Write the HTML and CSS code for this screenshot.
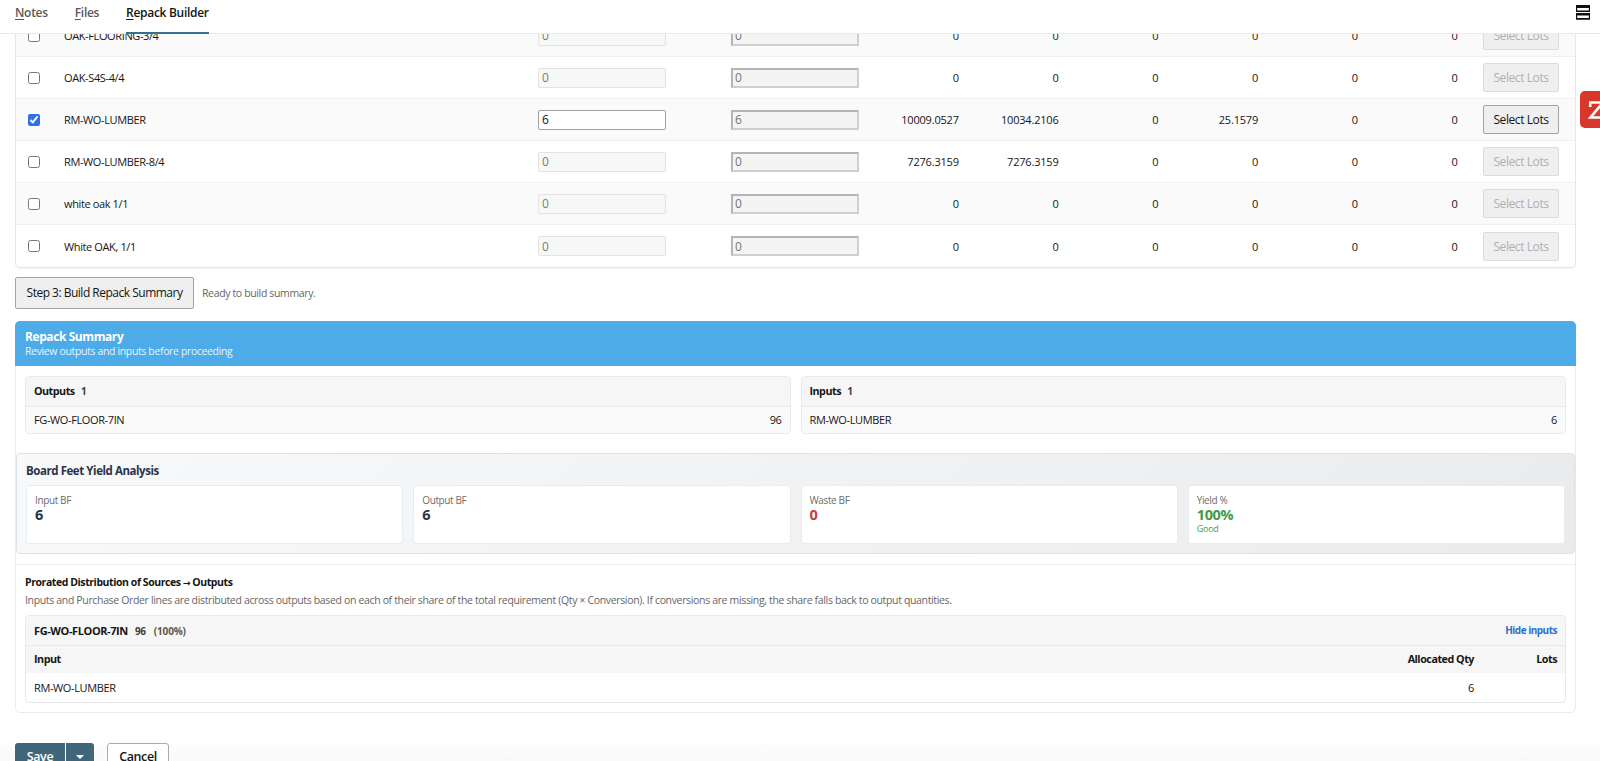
FILE: index.html
```html
<!DOCTYPE html>
<html lang="en">
<head>
  <meta charset="UTF-8">
  <title>Repack Builder</title>
  <link rel="stylesheet" href="styles.css">
</head>
<body>
  <div class="tabs">
    <a class="tab"><u>N</u>otes</a>
    <a class="tab"><u>F</u>iles</a>
    <a class="tab active"><u>R</u>epack Builder</a>
    <svg class="layout-icon" width="14" height="15" viewBox="0 0 14 15">
      <path fill="#111" fill-rule="evenodd" d="M0 0h14v7H0zM1.2 3v2.4h11.6V3zM0 8h14v6.7H0zM1.2 10.6v2.4h11.6v-2.4z"/>
    </svg>
  </div>

  <div class="content">
    <div class="lines" id="lines">
      <!-- Item rows are added here -->
    </div>

    <div class="step">
      <button type="button" class="btn step-btn">Step 3: Build Repack Summary</button>
      <span class="status">Ready to build summary.</span>
    </div>

    <div class="summary">
      <div class="summary-header">
        <div class="summary-title">Repack Summary</div>
        <div class="summary-sub">Review outputs and inputs before proceeding</div>
      </div>

      <div class="panels">
        <div class="panel">
          <div class="panel-head">Outputs <span class="count">1</span></div>
          <div class="panel-row"><span>FG-WO-FLOOR-7IN</span><span>96</span></div>
        </div>
        <div class="panel">
          <div class="panel-head">Inputs <span class="count">1</span></div>
          <div class="panel-row"><span>RM-WO-LUMBER</span><span>6</span></div>
        </div>
      </div>

      <div class="yield">
        <div class="yield-title">Board Feet Yield Analysis</div>
        <div class="yield-cards">
          <div class="yield-card">
            <div class="label">Input BF</div>
            <div class="value">6</div>
          </div>
          <div class="yield-card">
            <div class="label">Output BF</div>
            <div class="value">6</div>
          </div>
          <div class="yield-card">
            <div class="label">Waste BF</div>
            <div class="value waste">0</div>
          </div>
          <div class="yield-card">
            <div class="label">Yield %</div>
            <div class="value good">100%</div>
            <div class="note">Good</div>
          </div>
        </div>
      </div>

      <div class="prorated">
        <div class="prorated-title">Prorated Distribution of Sources <span class="arrow">→</span> Outputs</div>
        <div class="prorated-text">Inputs and Purchase Order lines are distributed across outputs based on each of their share of the total requirement (Qty × Conversion). If conversions are missing, the share falls back to output quantities.</div>
        <div class="alloc">
          <div class="alloc-head">
            <span class="alloc-item">FG-WO-FLOOR-7IN</span>
            <span class="count">96</span>
            <span class="percent">(100%)</span>
            <a class="toggle">Hide inputs</a>
          </div>
          <div class="alloc-row alloc-cols"><span>Input</span><span>Allocated Qty</span><span>Lots</span></div>
          <div class="alloc-row"><span>RM-WO-LUMBER</span><span>6</span><span></span></div>
        </div>
      </div>
    </div>
  </div>

  <div class="footer">
    <div class="save">
      <button type="button" class="save-main">Save</button>
      <button type="button" class="save-more"><i class="caret"></i></button>
    </div>
    <button type="button" class="cancel">Cancel</button>
  </div>

  <div class="side-badge">
    <svg width="20" height="37" viewBox="0 0 20 37">
      <path d="M10.2 16V11.5H23L10.5 26.5H24" fill="none" stroke="#fff" stroke-width="2.6"/>
    </svg>
  </div>

  <script>
    const items = [
      { name: 'OAK-FLOORING-3/4', qty: 0, values: [0, 0, 0, 0, 0, 0] },
      { name: 'OAK-S4S-4/4', qty: 0, values: [0, 0, 0, 0, 0, 0] },
      { name: 'RM-WO-LUMBER', qty: 6, checked: true, values: ['10009.0527', '10034.2106', 0, '25.1579', 0, 0] },
      { name: 'RM-WO-LUMBER-8/4', qty: 0, values: ['7276.3159', '7276.3159', 0, 0, 0, 0] },
      { name: 'white oak 1/1', qty: 0, values: [0, 0, 0, 0, 0, 0] },
      { name: 'White OAK, 1/1', qty: 0, values: [0, 0, 0, 0, 0, 0] }
    ];

    const lines = document.getElementById('lines');

    items.forEach(item => {
      const row = document.createElement('div');
      row.className = 'line';
      row.innerHTML = `
        <input type="checkbox" ${item.checked ? 'checked' : ''}>
        <span class="name">${item.name}</span>
        <input class="qty" type="text" value="${item.qty}" ${item.checked ? '' : 'disabled'}>
        <input class="base-qty" type="text" value="${item.qty}" disabled>
        ${item.values.map(value => `<span class="num">${value}</span>`).join('')}
        <button type="button" class="btn lots-btn" ${item.checked ? '' : 'disabled'}>Select Lots</button>
      `;
      lines.appendChild(row);
    });
  </script>
</body>
</html>
```

FILE: styles.css
```css
* {
  box-sizing: border-box;
}

body {
  margin: 0;
  height: 761px;
  overflow: hidden;
  display: flex;
  flex-direction: column;
  font-family: "Open Sans", "Noto Sans", sans-serif;
  font-size: 11px;
  letter-spacing: -0.38px;
  color: #161513;
  background: #fff;
}

button,
input {
  font-family: inherit;
  letter-spacing: inherit;
  margin: 0;
}

/* Tabs */
.tabs {
  flex: none;
  height: 34px;
  display: flex;
  gap: 27px;
  padding: 0 10px 0 15px;
  border-bottom: 1px solid #e9e9e9;
  background: #fff;
  position: relative;
  z-index: 1;
}

.tab {
  height: 34px;
  line-height: 26px;
  font-size: 12px;
  letter-spacing: -0.3px;
  font-weight: 600;
  color: #5b5854;
  white-space: nowrap;
}

.tab.active {
  color: #161513;
  border-bottom: 2px solid #36718f;
}

.tab u {
  text-underline-offset: 2px;
}

.layout-icon {
  margin: 5px 0 0 auto;
}

/* Item lines */
.content {
  flex: none;
  height: 680px;
  padding: 0 24px 0 15px;
  overflow: hidden;
}

.lines {
  margin-top: -20px;
  border: 1px solid #e6e6e6;
  border-radius: 0 0 5px 5px;
  box-shadow: 0 1px 1px rgba(0, 0, 0, 0.05);
}

.line {
  height: 42px;
  display: grid;
  grid-template-columns: 48px 474px 193px 128px repeat(6, 99.75px) 1fr;
  align-items: center;
  padding-right: 16px;
  border-bottom: 1px solid #f0f0f0;
}

.line:nth-child(odd) {
  background: #fafafa;
}

.line:last-child {
  border-bottom: none;
}

.line input[type="checkbox"] {
  width: 12px;
  height: 12px;
  margin-left: 12px;
  accent-color: #2f6fe8;
}

.num {
  text-align: right;
  letter-spacing: -0.2px;
}

.qty,
.base-qty {
  width: 128px;
  height: 20px;
  padding: 0 3px;
  font-size: 12px;
  color: #161513;
  background: #fff;
  border: 1px solid #a0a0a0;
  border-radius: 2px;
}

.qty:disabled {
  color: #7b7b7b;
  background: #f7f7f7;
  border-color: #e2e2e2;
}

.base-qty {
  padding: 0 2px;
  color: #757575;
  background: #f4f4f4;
  border: 2px solid #cfcfcf;
  border-top-color: #b5b5b5;
  border-left-color: #b5b5b5;
  border-radius: 0;
}

.btn {
  color: #161513;
  background: #efefef;
  border: 1px solid #a3a3a3;
  border-radius: 2px;
  white-space: nowrap;
}

.lots-btn {
  justify-self: end;
  width: 76px;
  height: 29px;
  padding: 0;
  font-size: 12px;
  letter-spacing: -0.42px;
}

.lots-btn:disabled {
  color: #b0b0b0;
  border-color: #dcdcdc;
}

/* Step 3 */
.step {
  display: flex;
  align-items: center;
  gap: 8px;
  margin: 9px 0 12px;
}

.step-btn {
  width: 179px;
  height: 32px;
  padding: 0 0 1px;
  font-size: 12px;
  letter-spacing: -0.5px;
}

.status {
  font-size: 10.5px;
  letter-spacing: -0.36px;
  color: #666;
}

/* Summary */
.summary {
  border: 1px solid #ebebeb;
  border-radius: 5px;
}

.summary-header {
  height: 45px;
  margin: -1px -1px 0;
  padding: 8px 10px 0;
  color: #fff;
  background: #4dabe7;
  border-radius: 5px 5px 0 0;
}

.summary-title {
  font-size: 12px;
  letter-spacing: -0.42px;
  line-height: 15px;
  font-weight: 700;
}

.summary-sub {
  font-size: 10.5px;
  letter-spacing: -0.36px;
  line-height: 14px;
  color: #e6f4fd;
}

.panels {
  display: grid;
  grid-template-columns: 1fr 1fr;
  gap: 10px;
  padding: 10px 9px 19px;
}

.panel {
  height: 58px;
  border: 1px solid #e9e9e9;
  border-radius: 4px;
  background: #fafafa;
  overflow: hidden;
}

.panel-head {
  height: 30px;
  padding: 0 8px;
  line-height: 28px;
  font-size: 10.75px;
  letter-spacing: -0.5px;
  font-weight: 700;
  background: #f6f6f6;
  border-bottom: 1px solid #e9e9e9;
}

.count {
  margin-left: 4px;
  font-size: 10px;
  letter-spacing: -0.3px;
  font-weight: 700;
  color: #403e3b;
}

.panel-row {
  display: flex;
  justify-content: space-between;
  padding: 0 8px;
  line-height: 26px;
}

.yield {
  height: 101px;
  padding: 9px;
  border: 1px solid #dfe2e4;
  border-radius: 4px;
  background: linear-gradient(135deg, #f8f9fa 0%, #e9ebed 100%);
}

.yield-title {
  font-size: 11.5px;
  letter-spacing: -0.44px;
  line-height: 15px;
  font-weight: 700;
  color: #2c3449;
}

.yield-cards {
  display: grid;
  grid-template-columns: repeat(4, 1fr);
  gap: 10px;
  margin-top: 7px;
}

.yield-card {
  height: 59px;
  padding: 8px;
  background: #fff;
  border: 1px solid #e9ecef;
  border-radius: 3px;
}

.label {
  font-size: 10px;
  line-height: 13px;
  color: #6c6c6c;
}

.value {
  font-size: 14.5px;
  line-height: 16px;
  font-weight: 700;
  color: #2c3449;
}

.value.waste {
  color: #c43c46;
}

.value.good {
  color: #449b46;
}

.note {
  font-size: 9px;
  letter-spacing: -0.25px;
  line-height: 12px;
  color: #449b46;
}

/* Prorated distribution */
.prorated {
  margin-top: 10px;
  padding: 9px;
  border-top: 1px solid #efefef;
}

.prorated-title {
  height: 16px;
  font-size: 10.5px;
  letter-spacing: -0.43px;
  line-height: 16px;
  font-weight: 700;
}

.arrow {
  font-family: "DejaVu Sans", sans-serif;
  font-size: 9px;
  line-height: 1;
}

.prorated-text {
  margin: 2px 0 7px;
  font-size: 10.5px;
  letter-spacing: -0.345px;
  line-height: 16px;
  color: #666;
  white-space: nowrap;
}

.alloc {
  border: 1px solid #e9e9e9;
  border-radius: 4px;
  overflow: hidden;
}

.alloc-head {
  height: 30px;
  display: flex;
  align-items: center;
  padding: 0 8px;
  background: #f6f6f6;
  border-bottom: 1px solid #e9e9e9;
}

.alloc-item {
  font-weight: 700;
  letter-spacing: -0.4px;
  margin-right: 3px;
}

.percent {
  margin-left: 8px;
  font-size: 10px;
  letter-spacing: -0.15px;
  font-weight: 700;
  color: #5b5854;
}

.toggle {
  margin: -2px 0 0 auto;
  font-size: 10px;
  letter-spacing: -0.5px;
  font-weight: 700;
  color: #2f6fc9;
}

.alloc-row {
  display: grid;
  grid-template-columns: 1fr 200px 83px;
  height: 29px;
  line-height: 29px;
  padding: 0 8px;
}

.alloc-row span + span {
  text-align: right;
}

.alloc-cols {
  height: 27px;
  line-height: 27px;
  font-size: 10.75px;
  letter-spacing: -0.48px;
  font-weight: 700;
  background: #f6f6f6;
}

/* Footer buttons */
.footer {
  flex: none;
  height: 47px;
  display: flex;
  gap: 13px;
  padding: 29px 0 0 15px;
  background: linear-gradient(#fff 50%, #f9f9f9 100%);
}

.save {
  display: flex;
  gap: 1px;
}

.save button {
  height: 28px;
  padding: 0 0 2px;
  color: #fff;
  background: #41667a;
  border: none;
}

.save .save-main {
  width: 50px;
  font-size: 12.5px;
  font-weight: 600;
  border-radius: 3px 0 0 3px;
}

.save .save-more {
  width: 28px;
  border-radius: 0 3px 3px 0;
}

.caret {
  display: inline-block;
  border: 4px solid transparent;
  border-top-color: #fff;
  border-bottom: none;
  vertical-align: middle;
}

.cancel {
  width: 62px;
  height: 28px;
  padding: 0 0 2px;
  font-size: 12.5px;
  font-weight: 600;
  color: #161513;
  background: #fff;
  border: 1px solid #aaa;
  border-radius: 3px;
}

/* Badge docked to the right edge */
.side-badge {
  position: absolute;
  top: 91px;
  right: 0;
  width: 20px;
  height: 37px;
  background: #d9372b;
  border-radius: 5px 0 0 5px;
}
```
